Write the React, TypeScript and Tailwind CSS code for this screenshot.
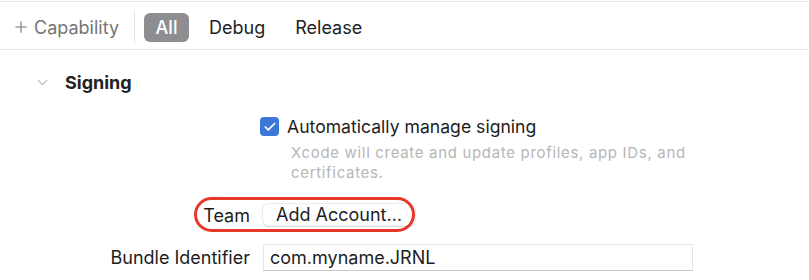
import { Plus, ChevronDown, Check } from 'lucide-react';

const font = { fontFamily: 'Inter, "Noto Sans", sans-serif' };

const tabs = ['All', 'Debug', 'Release'];

function Toolbar() {
  return (
    <div className="mt-px flex h-[49px] items-center border-y border-[#e4e4e4] pl-[12px] pt-[3px]">
      <button className="flex items-center gap-[4px] text-[18px] text-[#757575]">
        <Plus className="h-[18px] w-[18px]" strokeWidth={1.5} />
        <span>Capability</span>
      </button>
      <div className="ml-[15px] mr-[9px] h-[32px] w-px bg-[#e2e2e2]" />
      <div className="flex items-center gap-[10px] text-[18px] text-[#222]">
        {tabs.map((tab, i) =>
          i === 0 ? (
            <span
              key={tab}
              className="flex h-[29px] w-[45px] items-center justify-center rounded-[6px] bg-[#8e8e92] font-medium text-white"
            >
              {tab}
            </span>
          ) : (
            <span key={tab} className="px-[10px]">
              {tab}
            </span>
          ),
        )}
      </div>
    </div>
  );
}

export default function App() {
  return (
    <div className="h-[280px] w-[809px] overflow-hidden bg-white" style={font}>
      <Toolbar />

      <div className="flex h-[62px] items-center pl-[34px] pt-[2px]">
        <ChevronDown className="h-[17px] w-[17px] text-[#bcbcbc]" strokeWidth={1.8} />
        <span className="ml-[14px] text-[18px] font-bold text-[#222]">Signing</span>
      </div>

      <div className="grid grid-cols-[250px_1fr] gap-x-[13px]">
        <div />
        <div className="-ml-[3px] pt-[4px]">
          <label className="flex items-center gap-[8px] text-[17.6px] leading-[21px] text-[#1d1d1d]">
            <span className="flex h-[19px] w-[19px] items-center justify-center rounded-[4px] bg-[#3b78d8]">
              <Check className="h-[14px] w-[14px] text-white" strokeWidth={3} />
            </span>
            Automatically manage signing
          </label>
          <p className="ml-[31px] mt-[6px] w-[420px] text-[15px] leading-[20px] tracking-[0.045em] text-[#b6b6b6]">
            Xcode will create and update profiles, app IDs, and certificates.
          </p>
        </div>

        <div className="relative mt-[21px] flex h-[22px] items-center justify-end text-[18px] text-[#1d1d1d]">
          <span>Team</span>
          <div className="pointer-events-none absolute left-[194px] top-[-7px] h-[35px] w-[221px] rounded-full border-[3px] border-[#e5382b]" />
        </div>
        <div className="mt-[21px] flex h-[22px] items-center">
          <button className="h-[22px] rounded-[5px] bg-white px-[13px] text-[18px] leading-[22px] text-[#1d1d1d] shadow-[0_0_0_0.5px_rgba(0,0,0,0.15),0_1px_1px_rgba(0,0,0,0.1)]">
            Add Account…
          </button>
        </div>

        <div className="mt-[18px] flex h-[27px] items-center justify-end text-[18px] text-[#1d1d1d]">
          Bundle Identifier
        </div>
        <div className="mt-[18px]">
          <div className="flex h-[27px] w-[430px] items-center border border-[#e6e6e6] border-b-[#c8c8c8] bg-white px-[6px] text-[18px] text-[#1d1d1d]">
            com.myname.JRNL
          </div>
        </div>
      </div>
    </div>
  );
}
